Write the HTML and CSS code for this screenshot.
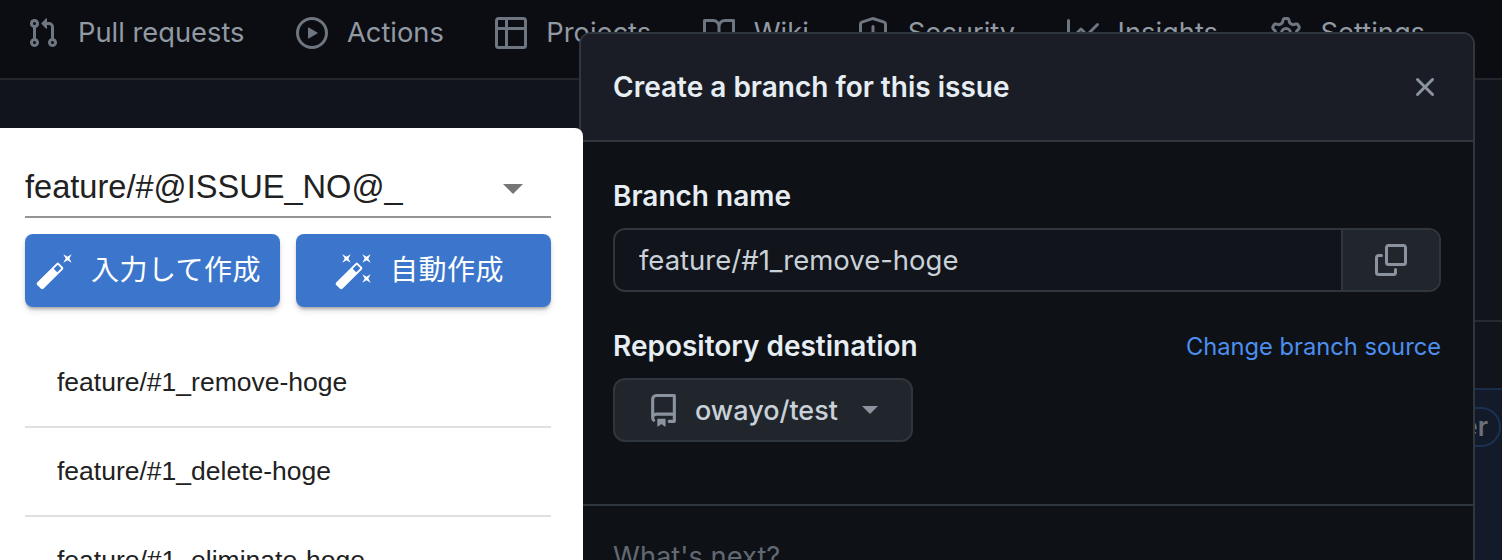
FILE: index.html
```html
<!DOCTYPE html>
<html lang="en">
<head>
<meta charset="UTF-8">
<title>Create a branch for this issue</title>
<link rel="stylesheet" href="styles.css">
</head>
<body>
<nav class="repo-nav">
    <a class="nav-item"><svg class="nav-icon" viewBox="0 0 16 16"><path d="M1.5 3.25a2.25 2.25 0 1 1 3 2.122v5.256a2.251 2.251 0 1 1-1.5 0V5.372A2.25 2.25 0 0 1 1.5 3.25Zm5.677-.177L9.573.677A.25.25 0 0 1 10 .854V2.5h1A2.5 2.5 0 0 1 13.5 5v5.628a2.251 2.251 0 1 1-1.5 0V5a1 1 0 0 0-1-1h-1v1.646a.25.25 0 0 1-.427.177L7.177 3.427a.25.25 0 0 1 0-.354ZM3.75 2.5a.75.75 0 1 0 0 1.5.75.75 0 0 0 0-1.5Zm0 9.5a.75.75 0 1 0 0 1.5.75.75 0 0 0 0-1.5Zm8.25.75a.75.75 0 1 0 1.5 0 .75.75 0 0 0-1.5 0Z"/></svg>Pull requests</a>
    <a class="nav-item"><svg class="nav-icon" viewBox="0 0 16 16"><path d="M8 0a8 8 0 1 1 0 16A8 8 0 0 1 8 0ZM1.5 8a6.5 6.5 0 1 0 13 0 6.5 6.5 0 0 0-13 0Zm4.879-2.773 4.264 2.559a.25.25 0 0 1 0 .428l-4.264 2.559A.25.25 0 0 1 6 10.559V5.442a.25.25 0 0 1 .379-.215Z"/></svg>Actions</a>
    <a class="nav-item"><svg class="nav-icon" viewBox="0 0 16 16"><path d="M0 1.75C0 .784.784 0 1.75 0h12.5C15.216 0 16 .784 16 1.75v12.5A1.75 1.75 0 0 1 14.25 16H1.75A1.75 1.75 0 0 1 0 14.25ZM6.5 6.5v8h7.75a.25.25 0 0 0 .25-.25V6.5Zm8-1.5V1.75a.25.25 0 0 0-.25-.25H6.5V5Zm-13 1.5v7.75c0 .138.112.25.25.25H5v-8ZM5 5V1.5H1.75a.25.25 0 0 0-.25.25V5Z"/></svg>Projects</a>
    <a class="nav-item nav-wiki"><svg class="nav-icon" viewBox="0 0 16 16"><path d="M0 1.75A.75.75 0 0 1 .75 1h4.253c1.227 0 2.317.59 3 1.501A3.743 3.743 0 0 1 11.006 1h4.245a.75.75 0 0 1 .75.75v10.5a.75.75 0 0 1-.75.75h-4.507a2.25 2.25 0 0 0-1.591.659l-.622.621a.75.75 0 0 1-1.06 0l-.622-.621A2.25 2.25 0 0 0 5.258 13H.75a.75.75 0 0 1-.75-.75Zm7.251 10.324.004-5.073-.002-2.253A2.25 2.25 0 0 0 5.003 2.5H1.5v9h3.757a3.75 3.75 0 0 1 1.994.574ZM8.755 4.75l-.004 7.322a3.752 3.752 0 0 1 1.992-.572H14.5v-9h-3.495a2.25 2.25 0 0 0-2.25 2.25Z"/></svg>Wiki</a>
    <a class="nav-item"><svg class="nav-icon" viewBox="0 0 16 16"><path d="M7.467.133a1.748 1.748 0 0 1 1.066 0l5.25 1.68A1.75 1.75 0 0 1 15 3.48V7c0 1.566-.32 3.182-1.303 4.682-.983 1.498-2.585 2.813-5.032 3.855a1.697 1.697 0 0 1-1.33 0c-2.447-1.042-4.049-2.357-5.032-3.855C1.32 10.182 1 8.566 1 7V3.48a1.75 1.75 0 0 1 1.217-1.667Zm.61 1.429a.25.25 0 0 0-.153 0l-5.25 1.68a.25.25 0 0 0-.174.238V7c0 1.358.275 2.666 1.057 3.86.784 1.194 2.121 2.34 4.366 3.297a.196.196 0 0 0 .154 0c2.245-.956 3.582-2.104 4.366-3.298C13.225 9.666 13.5 8.36 13.5 7V3.48a.251.251 0 0 0-.174-.237l-5.25-1.68ZM8.75 4.75v3a.75.75 0 0 1-1.5 0v-3a.75.75 0 0 1 1.5 0ZM9 10.5a1 1 0 1 1-2 0 1 1 0 0 1 2 0Z"/></svg>Security</a>
    <a class="nav-item"><svg class="nav-icon" viewBox="0 0 16 16"><path d="M1.5 1.75V13.5h13.75a.75.75 0 0 1 0 1.5H.75a.75.75 0 0 1-.75-.75V1.75a.75.75 0 0 1 1.5 0Zm14.28 2.53-5.25 5.25a.75.75 0 0 1-1.06 0L7 7.06 4.28 9.78a.751.751 0 0 1-1.042-.018.751.751 0 0 1-.018-1.042l3.25-3.25a.75.75 0 0 1 1.06 0L10 7.94l4.72-4.72a.751.751 0 0 1 1.042.018.751.751 0 0 1 .018 1.042Z"/></svg>Insights</a>
    <a class="nav-item"><svg class="nav-icon" viewBox="0 0 16 16"><path d="M8 0a8.2 8.2 0 0 1 .701.031C9.444.095 9.99.645 10.16 1.29l.288 1.107c.018.066.079.158.212.224.231.114.454.243.668.386.123.082.233.09.299.071l1.103-.303c.644-.176 1.392.021 1.82.63.27.385.506.792.704 1.218.315.675.111 1.422-.364 1.891l-.814.806c-.049.048-.098.147-.088.294.016.257.016.515 0 .772-.01.147.038.246.088.294l.814.806c.475.469.679 1.216.364 1.891a7.977 7.977 0 0 1-.704 1.217c-.428.61-1.176.807-1.82.63l-1.102-.302c-.067-.019-.177-.011-.3.071a5.909 5.909 0 0 1-.668.386c-.133.066-.194.158-.211.224l-.29 1.106c-.168.646-.715 1.196-1.458 1.26a8.006 8.006 0 0 1-1.402 0c-.743-.064-1.289-.614-1.458-1.26l-.289-1.106c-.018-.066-.079-.158-.212-.224a5.738 5.738 0 0 1-.668-.386c-.123-.082-.233-.09-.299-.071l-1.103.303c-.644.176-1.392-.021-1.82-.63a8.12 8.12 0 0 1-.704-1.218c-.315-.675-.111-1.422.363-1.891l.815-.806c.05-.048.098-.147.088-.294a6.214 6.214 0 0 1 0-.772c.01-.147-.038-.246-.088-.294l-.815-.806C.635 6.045.431 5.298.746 4.623a7.92 7.92 0 0 1 .704-1.217c.428-.61 1.176-.807 1.82-.63l1.102.302c.067.019.177.011.3-.071.214-.143.437-.272.668-.386.133-.066.194-.158.211-.224l.29-1.106C6.009.645 6.556.095 7.299.03 7.53.01 7.764 0 8 0Zm-.571 1.525c-.036.003-.108.036-.137.146l-.289 1.105c-.147.561-.549.967-.998 1.189-.173.086-.34.183-.5.29-.417.278-.97.423-1.529.27l-1.103-.303c-.109-.03-.175.016-.195.045-.22.312-.412.644-.573.99-.014.031-.021.11.059.19l.815.806c.411.406.562.957.53 1.456a4.709 4.709 0 0 0 0 .582c.032.499-.119 1.05-.53 1.456l-.815.806c-.081.08-.073.159-.059.19.162.346.353.677.573.989.02.03.085.076.195.046l1.102-.303c.56-.153 1.113-.008 1.53.27.161.107.328.204.501.29.447.222.85.629.997 1.189l.289 1.105c.029.109.101.143.137.146a6.6 6.6 0 0 0 1.142 0c.036-.003.108-.036.137-.146l.289-1.105c.147-.561.549-.967.998-1.189.173-.086.34-.183.5-.29.417-.278.97-.423 1.529-.27l1.103.303c.109.029.175-.016.195-.045.22-.313.411-.644.573-.99.014-.031.021-.11-.059-.19l-.815-.806c-.411-.406-.562-.957-.53-1.456a4.709 4.709 0 0 0 0-.582c-.032-.499.119-1.05.53-1.456l.815-.806c.081-.08.073-.159.059-.19a6.464 6.464 0 0 0-.573-.989c-.02-.03-.085-.076-.195-.046l-1.102.303c-.56.153-1.113.008-1.53-.27a4.44 4.44 0 0 0-.501-.29c-.447-.222-.85-.629-.997-1.189l-.289-1.105c-.029-.11-.101-.143-.137-.146a6.6 6.6 0 0 0-1.142 0ZM11 8a3 3 0 1 1-6 0 3 3 0 0 1 6 0ZM9.5 8a1.5 1.5 0 1 0-3.001.001A1.5 1.5 0 0 0 9.5 8Z"/></svg>Settings</a>
</nav>

<div class="behind">
    <div class="behind-line"></div>
    <div class="behind-band"><span class="behind-pill">Owner</span></div>
</div>

<!-- branch name dialog -->
<section class="dialog">
    <header class="dialog-header">
        <h2 class="dialog-title">Create a branch for this issue</h2>
        <svg class="dialog-close" viewBox="0 0 16 16"><path d="M3.72 3.72a.75.75 0 0 1 1.06 0L8 6.94l3.22-3.22a.749.749 0 0 1 1.275.326.749.749 0 0 1-.215.734L9.06 8l3.22 3.22a.749.749 0 0 1-.326 1.275.749.749 0 0 1-.734-.215L8 9.06l-3.22 3.22a.751.751 0 0 1-1.042-.018.751.751 0 0 1-.018-1.042L6.94 8 3.72 4.78a.75.75 0 0 1 0-1.06Z"/></svg>
    </header>
    <div class="dialog-body">
        <div class="field-label">Branch name</div>
        <div class="branch-input">
            <div class="branch-value">feature/#1_remove-hoge</div>
            <div class="copy-button"><svg class="copy-icon" viewBox="0 0 16 16"><path d="M0 6.75C0 5.784.784 5 1.75 5h1.5a.75.75 0 0 1 0 1.5h-1.5a.25.25 0 0 0-.25.25v7.5c0 .138.112.25.25.25h7.5a.25.25 0 0 0 .25-.25v-1.5a.75.75 0 0 1 1.5 0v1.5A1.75 1.75 0 0 1 9.25 16h-7.5A1.75 1.75 0 0 1 0 14.25Z"/><path d="M5 1.75C5 .784 5.784 0 6.75 0h7.5C15.216 0 16 .784 16 1.75v7.5A1.75 1.75 0 0 1 14.25 11h-7.5A1.75 1.75 0 0 1 5 9.25Zm1.75-.25a.25.25 0 0 0-.25.25v7.5c0 .138.112.25.25.25h7.5a.25.25 0 0 0 .25-.25v-7.5a.25.25 0 0 0-.25-.25Z"/></svg></div>
        </div>
        <div class="dest-row">
            <div class="field-label">Repository destination</div>
            <a class="source-link">Change branch source</a>
        </div>
        <div class="repo-button">
            <svg class="repo-icon" viewBox="0 0 16 16"><path d="M2 2.5A2.5 2.5 0 0 1 4.5 0h8.75a.75.75 0 0 1 .75.75v12.5a.75.75 0 0 1-.75.75h-2.5a.75.75 0 0 1 0-1.5h1.75v-2h-8a1 1 0 0 0-.714 1.7.75.75 0 1 1-1.072 1.05A2.495 2.495 0 0 1 2 11.5Zm10.5-1h-8a1 1 0 0 0-1 1v6.708A2.486 2.486 0 0 1 4.5 9h8ZM5 12.25a.25.25 0 0 1 .25-.25h3.5a.25.25 0 0 1 .25.25v3.25a.25.25 0 0 1-.4.2l-1.45-1.087a.249.249 0 0 0-.3 0L5.4 15.7a.25.25 0 0 1-.4-.2Z"/></svg>
            <span class="repo-name">owayo/test</span>
            <span class="repo-caret"></span>
        </div>
    </div>
    <div class="dialog-next">What's next?</div>
</section>

<!-- extension popup -->
<section class="popup">
    <div class="template-select">
        <span class="template-text">feature/#@ISSUE_NO@_</span>
        <span class="template-caret"></span>
    </div>
    <div class="popup-buttons">
        <button class="make-button">
            <svg class="wand" viewBox="0 0 24 24"><path d="M22 2l-2.5 1.4L17 2l1.4 2.5L17 7l2.5-1.4L22 7l-1.4-2.5zm-7.63 5.29a.9959.9959 0 0 0-1.41 0L1.29 18.96c-.39.39-.39 1.02 0 1.41l2.34 2.34c.39.39 1.02.39 1.41 0L16.7 11.05c.39-.39.39-1.02 0-1.41l-2.33-2.35zm-1.03 5.49-2.12-2.12 2.44-2.44 2.12 2.12-2.44 2.44z"/></svg>
            <span class="make-label">入力して作成</span>
        </button>
        <button class="make-button">
            <svg class="wand" viewBox="0 0 24 24"><path d="M7.5 5.6 10 7 8.6 4.5 10 2 7.5 3.4 5 2l1.4 2.5L5 7zm12 9.8L17 14l1.4 2.5L17 19l2.5-1.4L22 19l-1.4-2.5L22 14zM22 2l-2.5 1.4L17 2l1.4 2.5L17 7l2.5-1.4L22 7l-1.4-2.5zm-7.63 5.29a.9959.9959 0 0 0-1.41 0L1.29 18.96c-.39.39-.39 1.02 0 1.41l2.34 2.34c.39.39 1.02.39 1.41 0L16.7 11.05c.39-.39.39-1.02 0-1.41l-2.33-2.35zm-1.03 5.49-2.12-2.12 2.44-2.44 2.12 2.12-2.44 2.44z"/></svg>
            <span class="make-label">自動作成</span>
        </button>
    </div>
    <ul class="branch-list">
        <li class="branch-item">feature/#1_remove-hoge</li>
        <li class="branch-item">feature/#1_delete-hoge</li>
        <li class="branch-item">feature/#1_eliminate-hoge</li>
    </ul>
</section>
</body>
</html>
```

FILE: styles.css
```css
html, body {
    height: 100%;
}

body {
    margin: 0;
    overflow: hidden;
    background-color: #11141b;
    font-family: Inter, "Noto Sans", sans-serif;
    color: #e6edf3;
}

.repo-nav {
    display: flex;
    align-items: flex-start;
    height: 62px;
    padding: 16px 0 0 27px;
    background-color: #0b0d12;
    border-bottom: 2px solid #23262d;
    color: #9199a3;
    font-size: 27.3px;
    line-height: 34px;
}

.nav-item {
    display: flex;
    align-items: center;
    gap: 19px;
    margin-right: 51.5px;
    white-space: nowrap;
}

.nav-wiki {
    margin-right: 48px;
}

.nav-icon {
    width: 32px;
    height: 32px;
    fill: #6e7681;
}

.behind {
    padding-top: 240px;
}

.behind-line {
    height: 2px;
    background-color: #262a31;
}

.behind-band {
    display: flex;
    justify-content: flex-end;
    height: 172px;
    margin-top: 66px;
    padding-top: 17px;
    box-sizing: border-box;
    background-color: #131a29;
    border-top: 2px solid #1b2d4d;
}

.behind-pill {
    height: 36px;
    margin-right: 1px;
    padding: 0 11px;
    border: 2px solid #1c3052;
    border-radius: 20px;
    font-size: 26px;
    font-weight: 600;
    line-height: 36px;
    color: #6b7078;
}

.dialog {
    position: absolute;
    left: 579px;
    top: 32px;
    width: 892px;
    height: 600px;
    background-color: #0e1116;
    border: 2px solid #30363d;
    border-radius: 12px;
    overflow: hidden;
}

.dialog-header {
    display: flex;
    align-items: center;
    justify-content: space-between;
    height: 106px;
    padding: 0 32px;
    background-color: #1a1d25;
    border-bottom: 2px solid #30363d;
}

.dialog-title {
    margin: 0;
    font-size: 28px;
    font-weight: 600;
    color: #e6edf3;
}

.dialog-close {
    width: 32px;
    height: 32px;
    fill: #8b949e;
}

.dialog-body {
    height: 364px;
    box-sizing: border-box;
    padding: 36px 32px 0;
    border-bottom: 2px solid #30363d;
}

.field-label {
    font-size: 28px;
    font-weight: 600;
    line-height: 36px;
    color: #e6edf3;
}

.branch-input {
    display: flex;
    height: 64px;
    margin-top: 14px;
    box-sizing: border-box;
    background-color: #11141a;
    border: 2px solid #30363d;
    border-radius: 12px;
    overflow: hidden;
}

.branch-value {
    flex: 1;
    padding-left: 24px;
    font-size: 27.5px;
    line-height: 60px;
    color: #c9d1d9;
}

.copy-button {
    display: flex;
    align-items: center;
    justify-content: center;
    width: 96px;
    background-color: #21262d;
    border-left: 2px solid #30363d;
}

.copy-icon {
    width: 32px;
    height: 32px;
    fill: #8b949e;
}

.dest-row {
    display: flex;
    align-items: center;
    justify-content: space-between;
    margin-top: 36px;
}

.source-link {
    font-size: 23.7px;
    color: #4c8fef;
}

.repo-button {
    display: inline-flex;
    align-items: center;
    width: 300px;
    height: 64px;
    margin-top: 14px;
    padding-left: 32px;
    box-sizing: border-box;
    background-color: #21262d;
    border: 2px solid #30363d;
    border-radius: 12px;
}

.repo-icon {
    width: 33px;
    height: 33px;
    fill: #8b949e;
}

.repo-name {
    margin-left: 15px;
    font-size: 27px;
    font-weight: 500;
    color: #c9d1d9;
}

.repo-caret {
    margin-left: 24px;
    border-top: 8px solid #8b949e;
    border-left: 8px solid transparent;
    border-right: 8px solid transparent;
}

.dialog-next {
    padding: 34px 32px 0;
    font-size: 27.3px;
    color: #636973;
}

.popup {
    position: absolute;
    left: 0;
    top: 128px;
    width: 583px;
    height: 432px;
    box-sizing: border-box;
    padding: 0 32px 0 25px;
    background-color: #ffffff;
    border-top-right-radius: 8px;
    font-family: "Liberation Sans", sans-serif;
    color: #212121;
    overflow: hidden;
}

.template-select {
    display: flex;
    align-items: center;
    justify-content: space-between;
    height: 90px;
    padding: 30px 28px 0 0;
    box-sizing: border-box;
    border-bottom: 2px solid #949494;
    font-size: 32.6px;
}

.template-caret {
    margin-top: 4px;
    border-top: 10px solid #767676;
    border-left: 10px solid transparent;
    border-right: 10px solid transparent;
}

.popup-buttons {
    display: grid;
    grid-template-columns: 1fr 1fr;
    gap: 16px;
    margin-top: 16px;
}

.make-button {
    display: flex;
    align-items: center;
    justify-content: center;
    gap: 16px;
    height: 73px;
    padding: 0 9px 0 0;
    background-color: #3b76cc;
    border: none;
    border-radius: 8px;
    box-shadow: 0 3px 3px -1px rgba(0, 0, 0, 0.25), 0 4px 6px rgba(0, 0, 0, 0.12);
    color: #ffffff;
    font-family: "Noto Sans CJK JP", sans-serif;
    font-size: 28px;
    letter-spacing: 0.5px;
}

.make-label {
    padding-bottom: 6px;
}

.wand {
    width: 40px;
    height: 40px;
    fill: #ffffff;
}

.branch-list {
    margin: 32px 0 0;
    padding: 0;
    list-style: none;
}

.branch-item {
    height: 89px;
    box-sizing: border-box;
    padding-left: 32px;
    border-bottom: 2px solid #e0e0e0;
    font-size: 26.5px;
    line-height: 86px;
}
```
